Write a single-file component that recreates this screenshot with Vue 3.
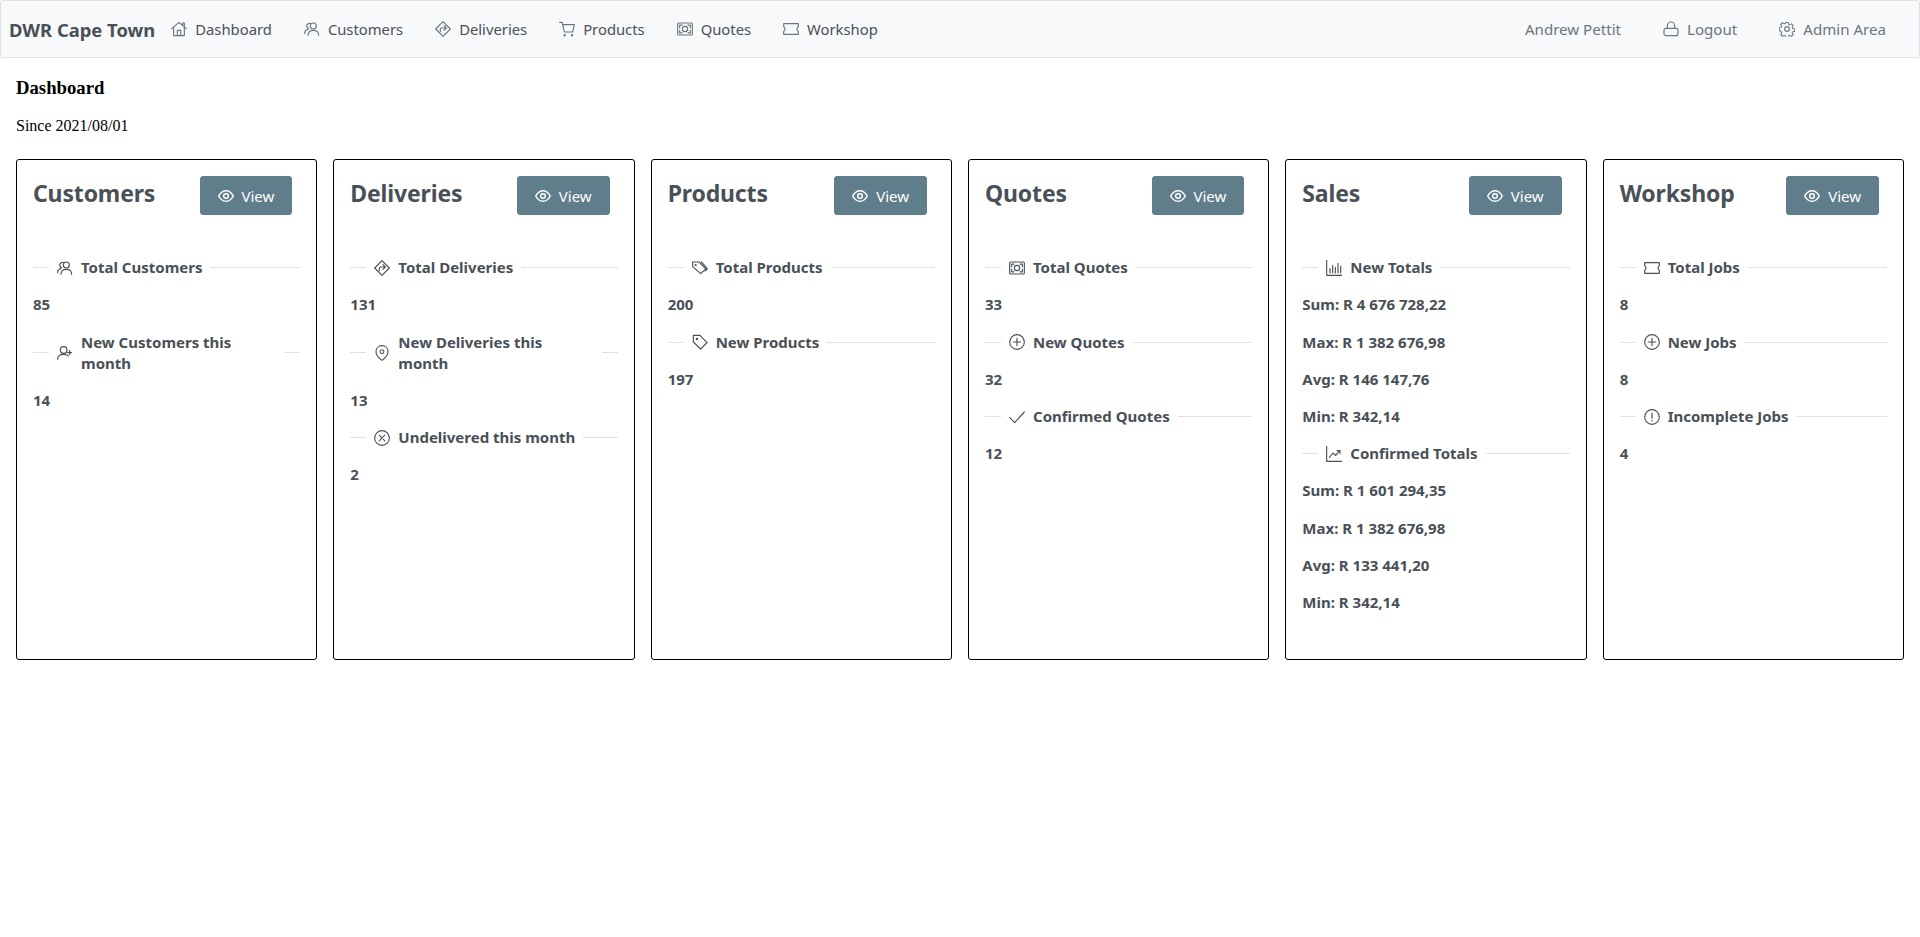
<template>
  <div class="page">
    <nav class="menubar">
      <span class="brand">DWR Cape Town</span>
      <a class="menu-item" v-for="item in menu" :key="item.label">
        <svg class="icon" viewBox="0 0 24 24" v-html="icons[item.icon]"></svg>
        <span>{{ item.label }}</span>
      </a>
      <div class="menu-end">
        <a class="menu-item muted"><span>Andrew Pettit</span></a>
        <a class="menu-item muted">
          <svg class="icon" viewBox="0 0 24 24" v-html="icons.lock"></svg>
          <span>Logout</span>
        </a>
        <a class="menu-item muted">
          <svg class="icon" viewBox="0 0 24 24" v-html="icons.cog"></svg>
          <span>Admin Area</span>
        </a>
      </div>
    </nav>

    <div class="content">
      <h3>Dashboard</h3>
      <p class="since">Since 2021/08/01</p>

      <div class="cards">
        <div class="card" v-for="card in cards" :key="card.title">
          <div class="card-head">
            <div class="card-title">{{ card.title }}</div>
            <button class="view-btn">
              <svg class="icon" viewBox="0 0 24 24" v-html="icons.eye"></svg>
              <span>View</span>
            </button>
          </div>
          <div class="card-body">
            <template v-for="(row, i) in card.rows" :key="i">
              <div class="divider" v-if="row.icon">
                <div class="divider-content">
                  <svg class="icon" viewBox="0 0 24 24" v-html="icons[row.icon]"></svg>
                  <span>{{ row.text }}</span>
                </div>
              </div>
              <p class="value" v-else>{{ row.text }}</p>
            </template>
          </div>
        </div>
      </div>
    </div>
  </div>
</template>

<script setup>
const icons = {
  home: '<path d="M1 11.500 12 2l11 9.500M4 9.500V22h16V9.500M9.500 22v-8h5v8M17.500 6V3h2.500v5"/>',
  users: '<circle cx="14" cy="7.500" r="4.500"/><path d="M6 21.500c0-4.800 3.200-7.500 8-7.500s8 2.700 8 7.500M9.500 3.800A4 4 0 0 0 7 11.500M1 19c0-3.600 2-5.800 5-6.500"/>',
  userplus: '<circle cx="10" cy="7.500" r="5"/><path d="M1 21.500c0-4.800 3.600-7.500 9-7.500 3 0 5.400.8 7 2.300M19 8.500v6M16 11.500h6"/>',
  directions: '<path d="M12 1 23 12 12 23 1 12Z"/><path d="M8 16v-3.500a2 2 0 0 1 2-2h7M13.500 7l3.500 3.500-3.500 3.500"/>',
  cart: '<path d="M1 2h3.800L8 16.500h12.500L23 5.500H5.500"/><circle cx="8.500" cy="21.500" r="1"/><circle cx="19.500" cy="21.500" r="1"/>',
  money: '<rect x="1" y="3" width="22" height="18" rx="1.500"/><circle cx="12" cy="12" r="4"/><path d="M4 10V6.200h3.500M20 10V6.200h-3.500M4 14v3.800h3.500M20 14v3.800h-3.500"/>',
  ticket: '<path d="M1 4h22v4.500c-2.600.7-2.600 6.300 0 7V20H1v-4.500c2.600-.7 2.600-6.300 0-7Z"/>',
  lock: '<path d="M6.500 11V7a5.500 5.500 0 0 1 11 0v4"/><rect x="1.500" y="11" width="21" height="11" rx="3"/>',
  cog: '<circle cx="12" cy="12" r="3.500"/><path d="M10 1h4l.7 3.300 2.100.9 2.800-1.800 2.900 2.900-1.800 2.800.9 2.100 3.300.7v4l-3.300.7-.9 2.100 1.800 2.800-2.900 2.900-2.800-1.800-2.100.9-.7 3.300h-4l-.7-3.300-2.100-.9-2.800 1.800-2.900-2.900 1.800-2.800-.9-2.100L-1 14v-4l3.300-.7.9-2.100-1.800-2.800 2.900-2.900 2.800 1.800 2.100-.9Z" transform="translate(1.200 1.200) scale(.9)"/>',
  eye: '<path d="M1 12c2.800-5 6.500-8 11-8s8.200 3 11 8c-2.800 5-6.500 8-11 8S3.800 17 1 12Z"/><circle cx="12" cy="12" r="3.500"/>',
  tags: '<path d="M1 3h9.500l10.500 10.500-8 7L1 10Z"/><path d="M14 3l9 9.800-3 3.700"/><circle cx="5.500" cy="7.500" r=".8"/>',
  tag: '<path d="M2 2h10l10.500 11-9.500 9.500L2 12Z"/><circle cx="7.500" cy="7.500" r="1"/>',
  marker: '<path d="M12 1c5.200 0 9 3.800 9 9 0 5.200-4.200 9.500-9 13-4.800-3.500-9-7.800-9-13 0-5.200 3.800-9 9-9Z"/><circle cx="12" cy="10" r="2.800"/>',
  times: '<circle cx="12" cy="12" r="11"/><path d="m7.800 7.800 8.400 8.400M16.200 7.800l-8.400 8.400"/>',
  plus: '<circle cx="12" cy="12" r="11"/><path d="M12 6.500v11M6.500 12h11"/>',
  check: '<path d="m1 13 7.500 7.500L23 4.500"/>',
  bar: '<path d="M1 .5V23h22.500M6 13v6.500M10 8v11.500M14 11v8.500M18 5v14.500M22 9v10.500"/>',
  line: '<path d="M1 .5V23h22.500M5 17l5.500-6.500 4 3.500 6-7M16.500 7h4.500v4.500"/>',
  alert: '<circle cx="12" cy="12" r="11"/><path d="M12 6v8M12 17v1"/>'
}

const menu = [
  { label: 'Dashboard', icon: 'home' },
  { label: 'Customers', icon: 'users' },
  { label: 'Deliveries', icon: 'directions' },
  { label: 'Products', icon: 'cart' },
  { label: 'Quotes', icon: 'money' },
  { label: 'Workshop', icon: 'ticket' }
]

const cards = [
  {
    title: 'Customers',
    rows: [
      { icon: 'users', text: 'Total Customers' },
      { text: '85' },
      { icon: 'userplus', text: 'New Customers this month' },
      { text: '14' }
    ]
  },
  {
    title: 'Deliveries',
    rows: [
      { icon: 'directions', text: 'Total Deliveries' },
      { text: '131' },
      { icon: 'marker', text: 'New Deliveries this month' },
      { text: '13' },
      { icon: 'times', text: 'Undelivered this month' },
      { text: '2' }
    ]
  },
  {
    title: 'Products',
    rows: [
      { icon: 'tags', text: 'Total Products' },
      { text: '200' },
      { icon: 'tag', text: 'New Products' },
      { text: '197' }
    ]
  },
  {
    title: 'Quotes',
    rows: [
      { icon: 'money', text: 'Total Quotes' },
      { text: '33' },
      { icon: 'plus', text: 'New Quotes' },
      { text: '32' },
      { icon: 'check', text: 'Confirmed Quotes' },
      { text: '12' }
    ]
  },
  {
    title: 'Sales',
    rows: [
      { icon: 'bar', text: 'New Totals' },
      { text: 'Sum: R 4 676 728,22' },
      { text: 'Max: R 1 382 676,98' },
      { text: 'Avg: R 146 147,76' },
      { text: 'Min: R 342,14' },
      { icon: 'line', text: 'Confirmed Totals' },
      { text: 'Sum: R 1 601 294,35' },
      { text: 'Max: R 1 382 676,98' },
      { text: 'Avg: R 133 441,20' },
      { text: 'Min: R 342,14' }
    ]
  },
  {
    title: 'Workshop',
    rows: [
      { icon: 'ticket', text: 'Total Jobs' },
      { text: '8' },
      { icon: 'plus', text: 'New Jobs' },
      { text: '8' },
      { icon: 'alert', text: 'Incomplete Jobs' },
      { text: '4' }
    ]
  }
]
</script>

<style scoped>
.page {
  background: #ffffff;
  min-height: 937px;
}

.menubar {
  display: flex;
  align-items: center;
  height: 58px;
  box-sizing: border-box;
  padding: 0 17px 0 8px;
  background: #f8f9fa;
  border: 1px solid #dee2e6;
  border-radius: 3px;
  font-family: "Noto Sans", sans-serif;
  font-size: 14.8px;
  color: #495057;
}

.brand {
  font-size: 18.4px;
  font-weight: 700;
}

.menu-item {
  display: flex;
  align-items: center;
  gap: 8px;
  padding: 0 16px;
  color: #495057;
}

.menu-item .icon {
  color: #6c757d;
}

.menu-item.muted {
  color: #6c757d;
  font-size: 15.1px;
}

.menu-end {
  display: flex;
  align-items: center;
  margin-left: auto;
  gap: 10px;
}

.icon {
  flex: none;
  width: 16px;
  height: 16px;
  fill: none;
  stroke: currentColor;
  stroke-width: 1.7;
  stroke-linecap: round;
  stroke-linejoin: round;
}

.content {
  padding: 0 16px;
  font-family: "Liberation Serif", serif;
  color: #000000;
}

h3 {
  margin: 18.72px 0;
  font-size: 18.72px;
}

.since {
  margin: 0 0 24px;
  font-size: 16px;
}

.cards {
  display: grid;
  grid-template-columns: repeat(6, 1fr);
  gap: 16px;
}

.card {
  box-sizing: border-box;
  padding: 16px;
  background: #ffffff;
  border: 1px solid #000000;
  border-radius: 3px;
  font-family: "Noto Sans", sans-serif;
  color: #495057;
}

.card-head {
  display: flex;
  justify-content: space-between;
  align-items: flex-start;
  padding-right: 8px;
  margin-bottom: 8px;
}

.card-title {
  font-size: 23px;
  font-weight: 700;
  letter-spacing: -0.15px;
  line-height: 35px;
}

.view-btn {
  display: flex;
  align-items: center;
  gap: 8px;
  height: 39px;
  padding: 0 17px;
  background: #607d8b;
  border: 1px solid #607d8b;
  border-radius: 3px;
  color: #ffffff;
  font-family: "Noto Sans", sans-serif;
  font-size: 15px;
}

.view-btn .icon {
  stroke-width: 2.2;
}

.card-body {
  padding: 17.75px 0 13.75px;
  font-size: 15px;
  font-weight: 700;
  line-height: 21.2px;
}

.value {
  margin: 16px 0;
}

.divider {
  display: flex;
  align-items: center;
  margin: 16px 0;
}

.divider::before,
.divider::after {
  content: "";
  height: 1px;
  background: #dee2e6;
}

.divider::before {
  flex: 0 0 16px;
}

.divider::after {
  flex: 1 0 16px;
}

.divider-content {
  display: flex;
  align-items: center;
  gap: 8px;
  padding: 0 8px;
}
</style>

<style>
html,
body {
  margin: 0;
  background: #ffffff;
}
</style>
